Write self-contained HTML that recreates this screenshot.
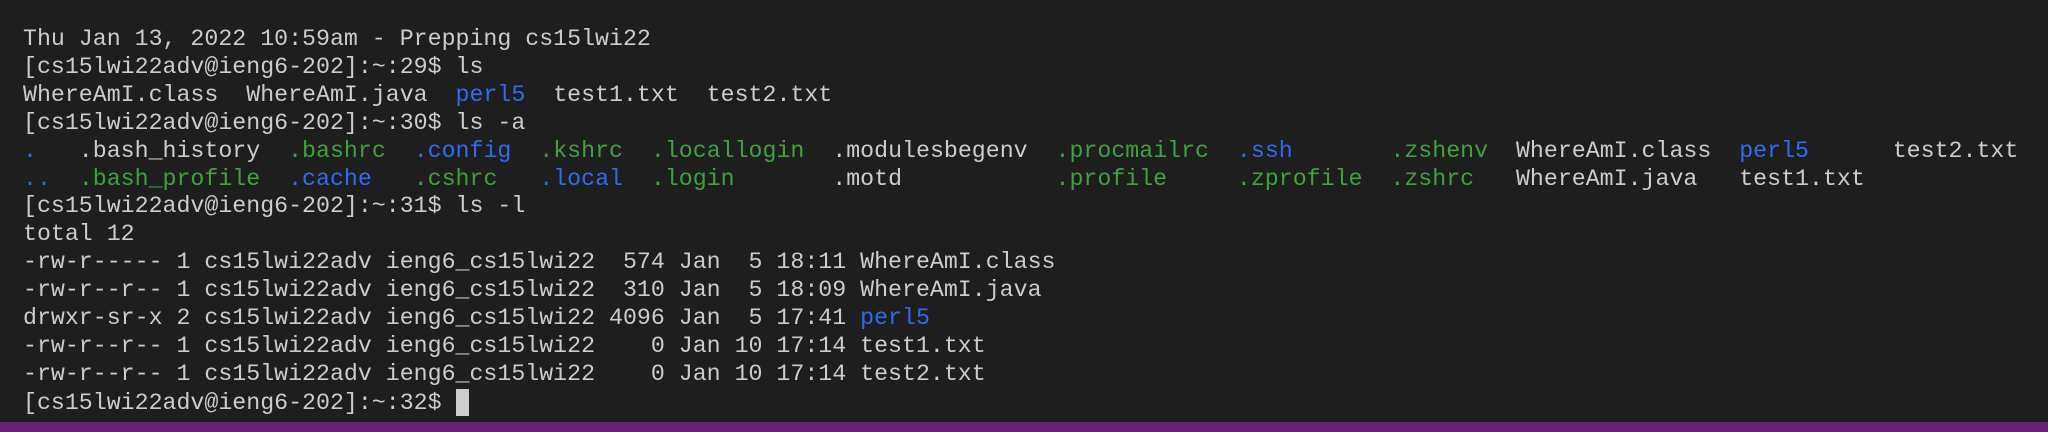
<!DOCTYPE html>
<html><head><meta charset="utf-8"><style>
html,body{margin:0;padding:0;}
body{width:2048px;height:432px;background:#1e1e1e;overflow:hidden;position:relative;}
pre{margin:0;position:absolute;left:23px;top:26px;font-family:"Liberation Mono",monospace;font-size:23.25px;line-height:27.9px;color:#cccccc;}
.b{color:#2f6bf2;}
.g{color:#3ea23e;}
.cur{display:inline-block;width:13px;height:27px;background:#cccccc;vertical-align:-7px;}
.bar{position:absolute;left:0;top:422px;width:2048px;height:10px;background:#68207a;}
</style></head><body>
<pre>Thu Jan 13, 2022 10:59am - Prepping cs15lwi22
[cs15lwi22adv@ieng6-202]:~:29$ ls
WhereAmI.class  WhereAmI.java  <span class="b">perl5</span>  test1.txt  test2.txt
[cs15lwi22adv@ieng6-202]:~:30$ ls -a
<span class="b">.</span>   .bash_history  <span class="g">.bashrc</span>  <span class="b">.config</span>  <span class="g">.kshrc</span>  <span class="g">.locallogin</span>  .modulesbegenv  <span class="g">.procmailrc</span>  <span class="b">.ssh</span>       <span class="g">.zshenv</span>  WhereAmI.class  <span class="b">perl5</span>      test2.txt
<span class="b">..</span>  <span class="g">.bash_profile</span>  <span class="b">.cache</span>   <span class="g">.cshrc</span>   <span class="b">.local</span>  <span class="g">.login</span>       .motd           <span class="g">.profile</span>     <span class="g">.zprofile</span>  <span class="g">.zshrc</span>   WhereAmI.java   test1.txt
[cs15lwi22adv@ieng6-202]:~:31$ ls -l
total 12
-rw-r----- 1 cs15lwi22adv ieng6_cs15lwi22  574 Jan  5 18:11 WhereAmI.class
-rw-r--r-- 1 cs15lwi22adv ieng6_cs15lwi22  310 Jan  5 18:09 WhereAmI.java
drwxr-sr-x 2 cs15lwi22adv ieng6_cs15lwi22 4096 Jan  5 17:41 <span class="b">perl5</span>
-rw-r--r-- 1 cs15lwi22adv ieng6_cs15lwi22    0 Jan 10 17:14 test1.txt
-rw-r--r-- 1 cs15lwi22adv ieng6_cs15lwi22    0 Jan 10 17:14 test2.txt
[cs15lwi22adv@ieng6-202]:~:32$ <span class="cur"></span></pre>
<div class="bar"></div>
</body></html>
